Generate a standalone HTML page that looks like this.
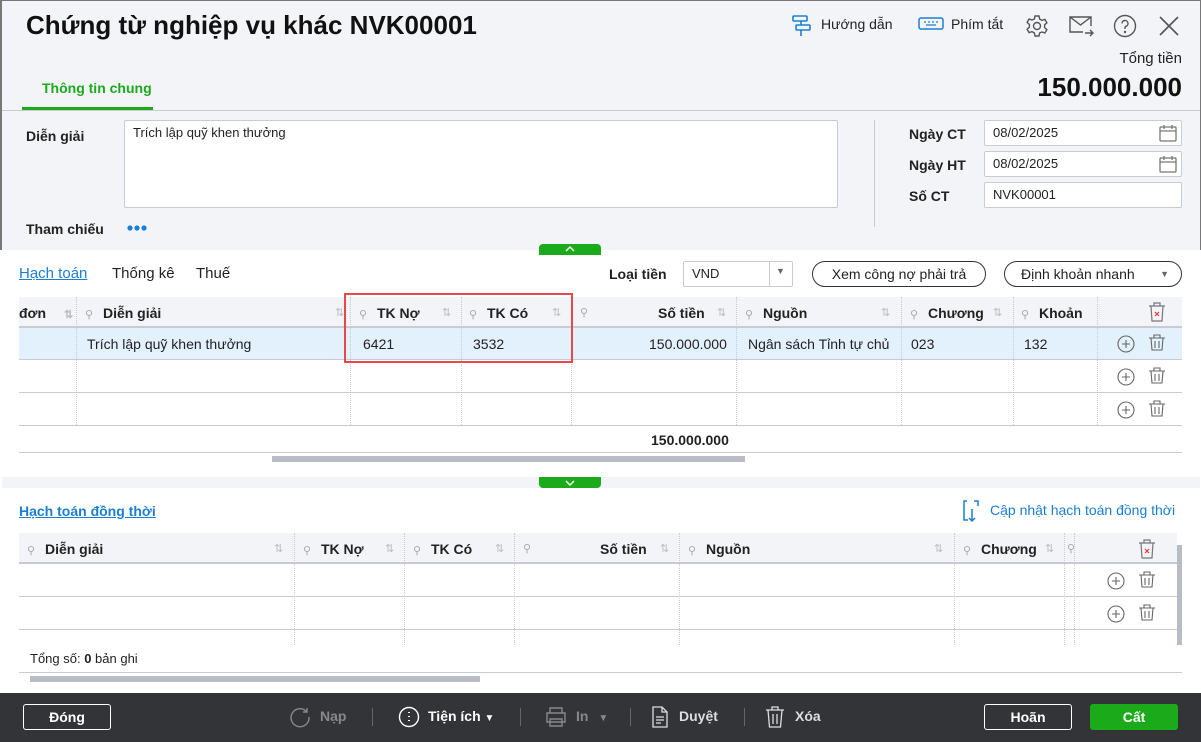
<!DOCTYPE html>
<html><head><meta charset="utf-8"><style>
*{box-sizing:border-box;margin:0;padding:0}
body{width:1201px;height:742px;overflow:hidden;font-family:"Liberation Sans",sans-serif;font-size:14px;color:#222;background:#fff;position:relative}
.a{position:absolute}
.b{font-weight:bold}
.top{left:0;top:0;width:1201px;height:250px;background:#f3f4f8;border-left:2px solid #777;border-top:1px solid #777;border-right:1px solid #777}
.inp{background:#fff;border:1px solid #c8cbd2;border-radius:2px;padding:4px 8px;font-size:13px}
.th{background:#f3f4f8;height:30px;border-bottom:1px solid #c8cbd2}
.col{position:absolute;top:0;height:100%;border-left:1px dotted #c8cbd2}
.hl{position:absolute;height:1px;background:#c8cbd2}
.pin{color:#aaa;font-size:11px}
.sort{color:#bbb;font-size:11px}
.pill{border:1px solid #333;border-radius:13px;background:#fff;text-align:center;line-height:24px;font-size:14px}
.ft{color:#fff;font-size:14px;font-weight:bold}
</style></head><body>
<div class="a top"></div>
<div class="a b" style="left:26px;top:10px;font-size:26px;color:#111">Chứng từ nghiệp vụ khác NVK00001</div>
<svg class="a" style="left:791px;top:14px" width="22" height="24" viewBox="0 0 22 24" fill="none" stroke="#1a7fd4" stroke-width="1.6"><rect x="2" y="2" width="14" height="5" rx="1"/><rect x="5" y="11" width="14" height="5" rx="1"/><path d="M10 7v4M10 16v6"/></svg>
<div class="a" style="left:821px;top:16px;font-size:14px">Hướng dẫn</div>
<svg class="a" style="left:918px;top:16px" width="26" height="16" viewBox="0 0 26 16" fill="none" stroke="#1a7fd4" stroke-width="1.5"><rect x="1" y="2" width="24" height="11" rx="2"/><path d="M6 6h2M10 6h2M14 6h2M18 6h2M8 9h10" stroke-width="1.2"/></svg>
<div class="a" style="left:951px;top:16px">Phím tắt</div>
<svg class="a" style="left:1025px;top:14px" width="24" height="24" viewBox="0 0 24 24" fill="none" stroke="#555" stroke-width="1.4"><circle cx="12" cy="12" r="3.5"/><path d="M10 2h4l.6 3 2.4 1.4 2.9-1 2 3.4-2.3 2v2.8l2.3 2-2 3.4-2.9-1L14.6 19 14 22h-4l-.6-3L7 17.6l-2.9 1-2-3.4 2.3-2v-2.8l-2.3-2 2-3.4 2.9 1L9.4 5z"/></svg>
<svg class="a" style="left:1067px;top:14px" width="28" height="24" viewBox="0 0 28 24" fill="none" stroke="#555" stroke-width="1.4"><path d="M16 18H3V3h21v9M3 3l10.5 8L24 3M18 19h8M23 16l3 3-3 3"/></svg>
<svg class="a" style="left:1113px;top:14px" width="24" height="24" viewBox="0 0 24 24" fill="none" stroke="#555" stroke-width="1.4"><circle cx="12" cy="12" r="10.5"/><path d="M9 9.5a3 3 0 1 1 4 2.8c-.8.4-1 1-1 2v.7"/><circle cx="12" cy="18" r=".5" fill="#555"/></svg>
<svg class="a" style="left:1158px;top:15px" width="22" height="22" viewBox="0 0 22 22" stroke="#555" stroke-width="1.6"><path d="M2 2l18 18M20 2L2 20"/></svg>
<div class="a" style="right:19px;top:50px;font-size:15px">Tổng tiền</div>
<div class="a b" style="right:19px;top:72px;font-size:26px;color:#111">150.000.000</div>
<div class="a b" style="left:42px;top:80px;color:#1aaa1a;font-size:14px">Thông tin chung</div>
<div class="a" style="left:22px;top:107px;width:131px;height:3px;background:#1aaa1a"></div>
<div class="a" style="left:2px;top:110px;width:1198px;height:1px;background:#c8cbd2"></div>
<div class="a b" style="left:26px;top:128px">Diễn giải</div>
<div class="a inp" style="left:124px;top:120px;width:714px;height:88px">Trích lập quỹ khen thưởng</div>
<div class="a b" style="left:26px;top:221px">Tham chiếu</div>
<svg class="a" style="left:127px;top:224px" width="22" height="8" viewBox="0 0 22 8" fill="#1a7fd4"><circle cx="3" cy="4" r="2.6"/><circle cx="10" cy="4" r="2.6"/><circle cx="17" cy="4" r="2.6"/></svg>
<div class="a" style="left:874px;top:120px;width:1px;height:107px;background:#c8cbd2"></div>
<div class="a b" style="left:909px;top:126px">Ngày CT</div>
<div class="a b" style="left:909px;top:157px">Ngày HT</div>
<div class="a b" style="left:909px;top:188px">Số CT</div>
<div class="a inp" style="left:984px;top:120px;width:198px;height:26px">08/02/2025</div>
<div class="a inp" style="left:984px;top:151px;width:198px;height:26px">08/02/2025</div>
<div class="a inp" style="left:984px;top:182px;width:198px;height:26px">NVK00001</div>
<svg class="a" style="left:1158px;top:123px" width="20" height="20" viewBox="0 0 20 20" fill="none" stroke="#777" stroke-width="1.3"><rect x="2" y="4" width="16" height="14" rx="1"/><path d="M2 8h16M6 2v4M14 2v4"/></svg>
<svg class="a" style="left:1158px;top:154px" width="20" height="20" viewBox="0 0 20 20" fill="none" stroke="#777" stroke-width="1.3"><rect x="2" y="4" width="16" height="14" rx="1"/><path d="M2 8h16M6 2v4M14 2v4"/></svg>
<div class="a" style="left:539px;top:244px;width:62px;height:11px;background:#1aaa1a;border-radius:4px 4px 0 0"></div>
<svg class="a" style="left:564px;top:245px" width="12" height="8" viewBox="0 0 12 8" fill="none" stroke="#fff" stroke-width="1.5"><path d="M2 6l4-4 4 4"/></svg>
<div class="a" style="left:19px;top:265px;color:#1a7fd4;text-decoration:underline;font-size:15px">Hạch toán</div>
<div class="a" style="left:112px;top:265px;font-size:15px">Thống kê</div>
<div class="a" style="left:196px;top:265px;font-size:15px">Thuế</div>
<div class="a b" style="left:609px;top:266px">Loại tiền</div>
<div class="a inp" style="left:683px;top:261px;width:110px;height:26px">VND</div>
<div class="a" style="left:769px;top:262px;width:1px;height:24px;background:#c8cbd2"></div>
<div class="a" style="left:776px;top:266px;font-size:9px;color:#666">▼</div>
<div class="a pill" style="left:812px;top:261px;width:174px;height:26px">Xem công nợ phải trả</div>
<div class="a pill" style="left:1004px;top:261px;width:178px;height:26px;text-align:left;padding-left:16px">Định khoản nhanh<span style="position:absolute;right:12px;font-size:9px;color:#666">▼</span></div>
<div class="a" style="left:19px;top:297px;width:1163px;height:156px">
 <div class="a th" style="left:0;top:0;width:1163px"></div>
 <div class="a" style="left:0;top:31px;width:1163px;height:31px;background:#e3f1fc"></div>
 <div class="hl" style="left:0;top:30px;width:1163px"></div>
 <div class="hl" style="left:0;top:62px;width:1163px"></div>
 <div class="hl" style="left:0;top:95px;width:1163px"></div>
 <div class="hl" style="left:0;top:128px;width:1163px"></div>
 <div class="hl" style="left:0;top:155px;width:1163px"></div>
 <div class="col" style="left:57px;height:128px"></div><div class="col" style="left:331px;height:128px"></div><div class="col" style="left:442px;height:128px"></div><div class="col" style="left:552px;height:128px"></div><div class="col" style="left:717px;height:128px"></div><div class="col" style="left:882px;height:128px"></div><div class="col" style="left:994px;height:128px"></div><div class="col" style="left:1078px;height:128px"></div>
 <div class="a b" style="left:0;top:8px">đơn <span class="sort" style="margin-left:14px">⇅</span></div>
 <div class="a" style="left:66px;top:8px"><span class="pin">⚲</span> <b style="margin-left:6px">Diễn giải</b></div><div class="a sort" style="left:316px;top:9px">⇅</div>
 <div class="a" style="left:340px;top:8px"><span class="pin">⚲</span> <b style="margin-left:6px">TK Nợ</b></div><div class="a sort" style="left:423px;top:9px">⇅</div>
 <div class="a" style="left:450px;top:8px"><span class="pin">⚲</span> <b style="margin-left:6px">TK Có</b></div><div class="a sort" style="left:533px;top:9px">⇅</div>
 <div class="a pin" style="left:561px;top:9px">⚲</div><div class="a b" style="left:639px;top:8px">Số tiền</div><div class="a sort" style="left:698px;top:9px">⇅</div>
 <div class="a" style="left:726px;top:8px"><span class="pin">⚲</span> <b style="margin-left:6px">Nguồn</b></div><div class="a sort" style="left:862px;top:9px">⇅</div>
 <div class="a" style="left:891px;top:8px"><span class="pin">⚲</span> <b style="margin-left:6px">Chương</b></div><div class="a sort" style="left:974px;top:9px">⇅</div>
 <div class="a" style="left:1002px;top:8px"><span class="pin">⚲</span> <b style="margin-left:6px">Khoản</b></div>
 <div class="a" style="left:68px;top:39px">Trích lập quỹ khen thưởng</div>
 <div class="a" style="left:344px;top:39px">6421</div>
 <div class="a" style="left:454px;top:39px">3532</div>
 <div class="a" style="left:630px;top:39px">150.000.000</div>
 <div class="a" style="left:729px;top:39px">Ngân sách Tỉnh tự chủ</div>
 <div class="a" style="left:892px;top:39px">023</div>
 <div class="a" style="left:1005px;top:39px">132</div>
 <div class="a b" style="left:632px;top:135px">150.000.000</div>
</div>
<div class="a" style="left:272px;top:456px;width:473px;height:6px;background:#b8bcc4"></div>
<div class="a" style="left:344px;top:293px;width:229px;height:70px;border:2px solid #e84848"></div>
<svg class="a" style="left:1147px;top:301px" width="20" height="22" viewBox="0 0 20 22" fill="none" stroke="#777" stroke-width="1.2"><path d="M2 5h16M7 5V2h6v3M4 5l1 15h10l1-15"/><path d="M8 11l4 4M12 11l-4 4" stroke="#e33"/></svg>
<svg class="a" style="left:0;top:0" width="1201" height="742" fill="none" stroke="#666" stroke-width="1.1">
 <g><circle cx="1126" cy="344" r="8"/><path d="M1126 340v8M1122 344h8"/></g>
 <g><path d="M1149 338h16M1154 338v-3h6v3M1151 338l1 12h10l1-12M1155 341v7M1159 341v7"/></g>
 <g transform="translate(0,33)"><circle cx="1126" cy="344" r="8"/><path d="M1126 340v8M1122 344h8"/><path d="M1149 338h16M1154 338v-3h6v3M1151 338l1 12h10l1-12M1155 341v7M1159 341v7"/></g>
 <g transform="translate(0,66)"><circle cx="1126" cy="344" r="8"/><path d="M1126 340v8M1122 344h8"/><path d="M1149 338h16M1154 338v-3h6v3M1151 338l1 12h10l1-12M1155 341v7M1159 341v7"/></g>
 <g transform="translate(-10,237)"><circle cx="1126" cy="344" r="8"/><path d="M1126 340v8M1122 344h8"/><path d="M1149 338h16M1154 338v-3h6v3M1151 338l1 12h10l1-12M1155 341v7M1159 341v7"/></g>
 <g transform="translate(-10,270)"><circle cx="1126" cy="344" r="8"/><path d="M1126 340v8M1122 344h8"/><path d="M1149 338h16M1154 338v-3h6v3M1151 338l1 12h10l1-12M1155 341v7M1159 341v7"/></g>
</svg>
<div class="a" style="left:2px;top:477px;width:1198px;height:11px;background:#f3f4f8"></div>
<div class="a" style="left:539px;top:477px;width:62px;height:11px;background:#1aaa1a;border-radius:0 0 4px 4px"></div>
<svg class="a" style="left:564px;top:479px" width="12" height="8" viewBox="0 0 12 8" fill="none" stroke="#fff" stroke-width="1.5"><path d="M2 2l4 4 4-4"/></svg>
<div class="a b" style="left:19px;top:503px;color:#1a7fd4;text-decoration:underline;font-size:14px">Hạch toán đồng thời</div>
<svg class="a" style="left:961px;top:499px" width="20" height="24" viewBox="0 0 20 24" fill="none" stroke="#1a7fd4" stroke-width="1.5"><path d="M6 2H3v19h4M13 2h4v5M11 10v12M8 19l3 3 3-3"/></svg>
<div class="a" style="left:990px;top:502px;color:#1a7fd4">Cập nhật hạch toán đồng thời</div>
<div class="a" style="left:19px;top:533px;width:1158px;height:112px;overflow:hidden">
 <div class="a th" style="left:0;top:0;width:1158px"></div>
 <div class="hl" style="left:0;top:30px;width:1158px"></div>
 <div class="hl" style="left:0;top:63px;width:1158px"></div>
 <div class="hl" style="left:0;top:96px;width:1158px"></div>
 <div class="col" style="left:275px"></div><div class="col" style="left:385px"></div><div class="col" style="left:495px"></div><div class="col" style="left:660px"></div><div class="col" style="left:935px"></div><div class="col" style="left:1045px"></div><div class="col" style="left:1055px"></div>
 <div class="a" style="left:8px;top:8px"><span class="pin">⚲</span> <b style="margin-left:6px">Diễn giải</b></div><div class="a sort" style="left:255px;top:9px">⇅</div>
 <div class="a" style="left:284px;top:8px"><span class="pin">⚲</span> <b style="margin-left:6px">TK Nợ</b></div><div class="a sort" style="left:366px;top:9px">⇅</div>
 <div class="a" style="left:394px;top:8px"><span class="pin">⚲</span> <b style="margin-left:6px">TK Có</b></div><div class="a sort" style="left:476px;top:9px">⇅</div>
 <div class="a pin" style="left:504px;top:9px">⚲</div><div class="a b" style="left:581px;top:8px">Số tiền</div><div class="a sort" style="left:641px;top:9px">⇅</div>
 <div class="a" style="left:669px;top:8px"><span class="pin">⚲</span> <b style="margin-left:6px">Nguồn</b></div><div class="a sort" style="left:915px;top:9px">⇅</div>
 <div class="a" style="left:944px;top:8px"><span class="pin">⚲</span> <b style="margin-left:6px">Chương</b></div><div class="a sort" style="left:1026px;top:9px">⇅</div>
 <div class="a pin" style="left:1048px;top:9px">⚲</div>
</div>
<svg class="a" style="left:1137px;top:538px" width="20" height="22" viewBox="0 0 20 22" fill="none" stroke="#777" stroke-width="1.2"><path d="M2 5h16M7 5V2h6v3M4 5l1 15h10l1-15"/><path d="M8 11l4 4M12 11l-4 4" stroke="#e33"/></svg>
<div class="a" style="left:1177px;top:545px;width:5px;height:100px;background:#b8bcc4"></div>
<div class="a" style="left:30px;top:651px;font-size:13px">Tổng số: <b>0</b> bản ghi</div>
<div class="a" style="left:19px;top:672px;width:1163px;height:1px;background:#c8cbd2"></div>
<div class="a" style="left:30px;top:676px;width:450px;height:6px;background:#b8bcc4"></div>
<div class="a" style="left:0;top:693px;width:1201px;height:49px;background:#333438"></div>
<div class="a ft" style="left:23px;top:704px;width:88px;height:26px;border:1px solid #fff;border-radius:3px;text-align:center;line-height:24px">Đóng</div>
<svg class="a" style="left:289px;top:706px" width="22" height="22" viewBox="0 0 22 22" fill="none" stroke="#888" stroke-width="1.4"><path d="M18 6A9 9 0 1 0 20 11M18 2v4h-4"/></svg>
<div class="a ft" style="left:320px;top:708px;color:#888">Nạp</div>
<div class="a" style="left:372px;top:708px;width:1px;height:18px;background:#666"></div>
<svg class="a" style="left:398px;top:706px" width="22" height="22" viewBox="0 0 22 22" fill="none" stroke="#fff" stroke-width="1.4"><circle cx="11" cy="11" r="9.5"/><path d="M11 6v1M11 10v1M11 14v1" stroke-width="2"/></svg>
<div class="a ft" style="left:428px;top:708px">Tiện ích <span style="font-size:10px">▼</span></div>
<div class="a" style="left:520px;top:708px;width:1px;height:18px;background:#666"></div>
<svg class="a" style="left:544px;top:706px" width="24" height="22" viewBox="0 0 24 22" fill="none" stroke="#888" stroke-width="1.4"><path d="M6 7V2h12v5M3 7h18v9H3zM6 13h12v7H6z"/></svg>
<div class="a ft" style="left:576px;top:708px;color:#888">In <span style="font-size:10px;margin-left:6px">▼</span></div>
<div class="a" style="left:630px;top:708px;width:1px;height:18px;background:#666"></div>
<svg class="a" style="left:651px;top:706px" width="18" height="22" viewBox="0 0 18 22" fill="none" stroke="#ddd" stroke-width="1.3"><path d="M2 1h9l5 5v15H2zM11 1v5h5M5 11h8M5 14h8M5 17h5"/></svg>
<div class="a ft" style="left:679px;top:708px;color:#ddd">Duyệt</div>
<div class="a" style="left:744px;top:708px;width:1px;height:18px;background:#666"></div>
<svg class="a" style="left:764px;top:705px" width="22" height="24" viewBox="0 0 22 24" fill="none" stroke="#ddd" stroke-width="1.3"><path d="M2 5h18M8 5V2h6v3M4 5l1.5 17h11L18 5M9 9v10M13 9v10"/></svg>
<div class="a ft" style="left:795px;top:708px;color:#ddd">Xóa</div>
<div class="a ft" style="left:984px;top:704px;width:88px;height:26px;border:1px solid #fff;border-radius:3px;text-align:center;line-height:24px">Hoãn</div>
<div class="a ft" style="left:1090px;top:704px;width:88px;height:26px;background:#1aaa1a;border-radius:3px;text-align:center;line-height:26px">Cất</div>
</body></html>
